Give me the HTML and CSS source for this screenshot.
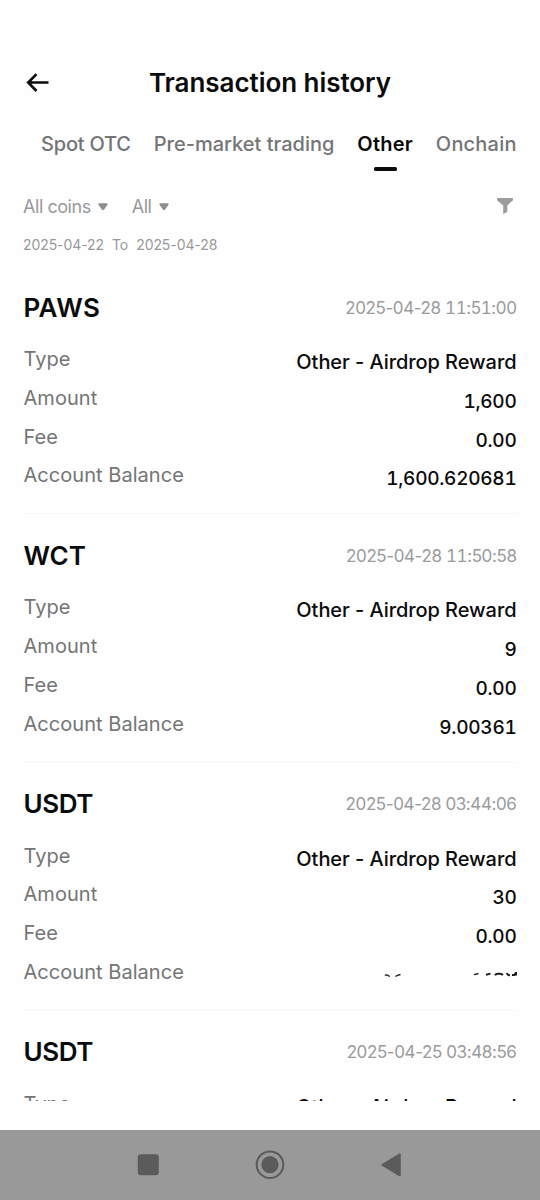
FILE: index.html
```html
<!DOCTYPE html>
<html lang="en">
<head>
<meta charset="utf-8">
<title>Transaction history</title>
<link rel="stylesheet" href="styles.css">
</head>
<body>
<div class="screen">
  <header class="topbar">
    <svg class="back" viewBox="0 0 24 20" fill="none" stroke="#0b0b0b" stroke-width="2.6"><path d="M10.5 1.2 2.2 9.5l8.3 8.5M2.2 9.5H22.500"/></svg>
    <h1 class="title">Transaction history</h1>
  </header>
  <nav class="tabs">
    <span class="tab tab-spot">Spot OTC</span>
    <span class="tab tab-market">Pre-market trading</span>
    <span class="tab tab-active">Other</span>
    <span class="tab tab-chain">Onchain</span>
  </nav>
  <section class="filters">
    <span class="filter filter-coins">All coins</span>
    <svg class="caret" viewBox="0 0 10 8"><path d="M1.2.3h7.6q1.2.1.7 1.5L6 6.8q-1 .9-2 0L.5 1.8Q0 .4 1.2.3z" fill="#8d8e90"/></svg>
    <span class="filter filter-all">All</span>
    <svg class="caret" viewBox="0 0 10 8"><path d="M1.2.3h7.6q1.2.1.7 1.5L6 6.8q-1 .9-2 0L.5 1.8Q0 .4 1.2.3z" fill="#8d8e90"/></svg>
    <svg class="funnel" viewBox="0 0 16 16"><path d="M.8 0h14.4q.8 0 .8.8v1.500L10.300 7.500v6.200L6.200 16V7.500L0 2.300V.8Q0 0 .8 0z" fill="#9c9c9d"/></svg>
  </section>
  <div class="range"><span>2025-04-22</span><span>To</span><span>2025-04-28</span></div>
  <main class="list">
    <article class="item">
      <div class="head"><h2 class="coin coin-paws">PAWS</h2><time class="time">2025-04-28 <span class="fig">11</span>:5<span class="fig">1</span>:00</time></div>
      <div class="row"><span class="label">Type</span><span class="value text">Other - Airdrop Reward</span></div>
      <div class="row"><span class="label">Amount</span><span class="value">1,600</span></div>
      <div class="row"><span class="label">Fee</span><span class="value">0.00</span></div>
      <div class="row"><span class="label">Account Balance</span><span class="value">1,600.620681</span></div>
    </article>
    <article class="item">
      <div class="head"><h2 class="coin">WCT</h2><time class="time">2025-04-28 <span class="fig">11</span>:50:58</time></div>
      <div class="row"><span class="label">Type</span><span class="value text">Other - Airdrop Reward</span></div>
      <div class="row"><span class="label">Amount</span><span class="value">9</span></div>
      <div class="row"><span class="label">Fee</span><span class="value">0.00</span></div>
      <div class="row"><span class="label">Account Balance</span><span class="value">9.00361</span></div>
    </article>
    <article class="item">
      <div class="head"><h2 class="coin coin-usdt">USDT</h2><time class="time">2025-04-28 03:44:06</time></div>
      <div class="row"><span class="label">Type</span><span class="value text">Other - Airdrop Reward</span></div>
      <div class="row"><span class="label">Amount</span><span class="value">30</span></div>
      <div class="row"><span class="label">Fee</span><span class="value">0.00</span></div>
      <div class="row"><span class="label">Account Balance</span>
        <svg class="masked" viewBox="0 0 134 6" fill="none" stroke="#1c1c1c" stroke-width="1.300"><path d="M1.800 3.200 4 3 6.800 4.500M12.500 4.500Q14 3.300 17.500 2.500M91 2.700 95.500 1.500"/><path stroke-width="2" d="M103 2.800 107.500 1.600M112 3.200Q113 1.500 115.500 1.700H117Q119 1.600 119.800 3.200M124 1q.2 2.300 3 2.200M129 3h2.500L133 .6V3.500"/></svg>
      </div>
    </article>
    <article class="item">
      <div class="head"><h2 class="coin coin-usdt">USDT</h2><time class="time">2025-04-25 03:48:56</time></div>
      <div class="row"><span class="label">Type</span><span class="value text">Other - Airdrop Reward</span></div>
    </article>
  </main>
  <footer class="navbar">
    <svg class="recent" viewBox="0 0 22 22"><rect x=".8" y=".3" width="21" height="21" rx="3" fill="#5b5b5b"/></svg>
    <svg class="home" viewBox="0 0 30 30"><circle cx="15" cy="14.700" r="13.300" fill="none" stroke="#5b5b5b" stroke-width="2"/><circle cx="15" cy="14.700" r="8.600" fill="#5b5b5b"/></svg>
    <svg class="prev" viewBox="0 0 20 24"><path d="M1.500 11.800 18.800 1.300v21z" fill="#5b5b5b" stroke="#5b5b5b" stroke-width="2" stroke-linejoin="round"/></svg>
  </footer>
</div>
</body>
</html>
```
FILE: styles.css
```css
* { box-sizing: border-box; }
body { margin: 0; background: #fefefe; font-family: Inter, "Liberation Sans", sans-serif; color: #0b0b0b; }
h1, h2 { margin: 0; }
svg { display: block; flex: none; }
.screen { width: 540px; height: 1200px; display: flex; flex-direction: column; overflow: hidden; white-space: nowrap; }
.topbar { margin-top: 61px; height: 43px; flex: none; display: grid; grid-template-columns: 52px 1fr 52px; align-items: center; }
.back { width: 24px; height: 20px; margin-left: 25.5px; }
.title { font-size: 26px; font-weight: 600; text-align: center; letter-spacing: -0.05px; line-height: 43px; }
.tabs { height: 78px; flex: none; display: flex; gap: 23px; padding: 20px 0 0 41px; }
.tab { font-size: 20px; line-height: 40px; height: 48px; font-weight: 450; color: #747576; flex: none; }
.tab-spot { letter-spacing: -0.2px; }
.tab-chain { letter-spacing: 0.2px; }
.tab-active { color: #0b0b0b; font-weight: 600; letter-spacing: 0.2px; display: flex; flex-direction: column; align-items: center; }
.tab-active::after { content: ""; width: 23px; height: 4.5px; border-radius: 1.5px; background: #0b0b0b; margin-top: 2.5px; flex: none; }
.filters { height: 49px; flex: none; display: flex; align-items: center; padding: 0 27px 0 23px; }
.filter { font-size: 18px; color: #98999b; letter-spacing: -0.45px; }
.caret { width: 10px; height: 8px; margin-left: 7px; }
.filter-all { margin-left: 24px; }
.funnel { width: 16px; height: 16px; margin: -2px 0 0 auto; }
.range { height: 35px; flex: none; display: flex; gap: 8px; align-items: center; padding: 0 23px 9px; font-size: 14px; letter-spacing: -0.08px; color: #98999b; }
.list { height: 835px; flex: none; overflow: hidden; padding: 0 23.5px; }
.item { height: 248.3px; padding-top: 20px; border-bottom: 1px solid #f6f6f6; }
.head { height: 42px; margin-bottom: 12.2px; display: flex; align-items: center; justify-content: space-between; }
.coin { font-size: 26px; font-weight: 600; }
.coin-paws { letter-spacing: 0.4px; }
.coin-usdt { letter-spacing: -0.4px; }
.time { font-size: 17px; color: #9a9b9d; letter-spacing: -0.4px; padding-top: 1px; }
.fig { font-variant-numeric: tabular-nums; }
.row { height: 38.7px; line-height: 38.7px; display: flex; justify-content: space-between; }
.label { font-size: 20px; color: #747576; letter-spacing: 0.04px; }
.value { font-size: 19px; font-weight: 500; padding-top: 4px; letter-spacing: -0.25px; font-variant-numeric: tabular-nums; }
.text { font-size: 20px; letter-spacing: -0.06px; padding-top: 3px; font-variant-numeric: normal; }
.masked { width: 134px; height: 6px; margin-top: 19px; }
.navbar { height: 70px; flex: none; margin-top: auto; background: #999; display: flex; align-items: center; padding-left: 137px; }
.recent { width: 22px; height: 22px; }
.home { width: 30px; height: 30px; margin-left: 96px; }
.prev { width: 20px; height: 24px; margin-left: 96px; }
```
